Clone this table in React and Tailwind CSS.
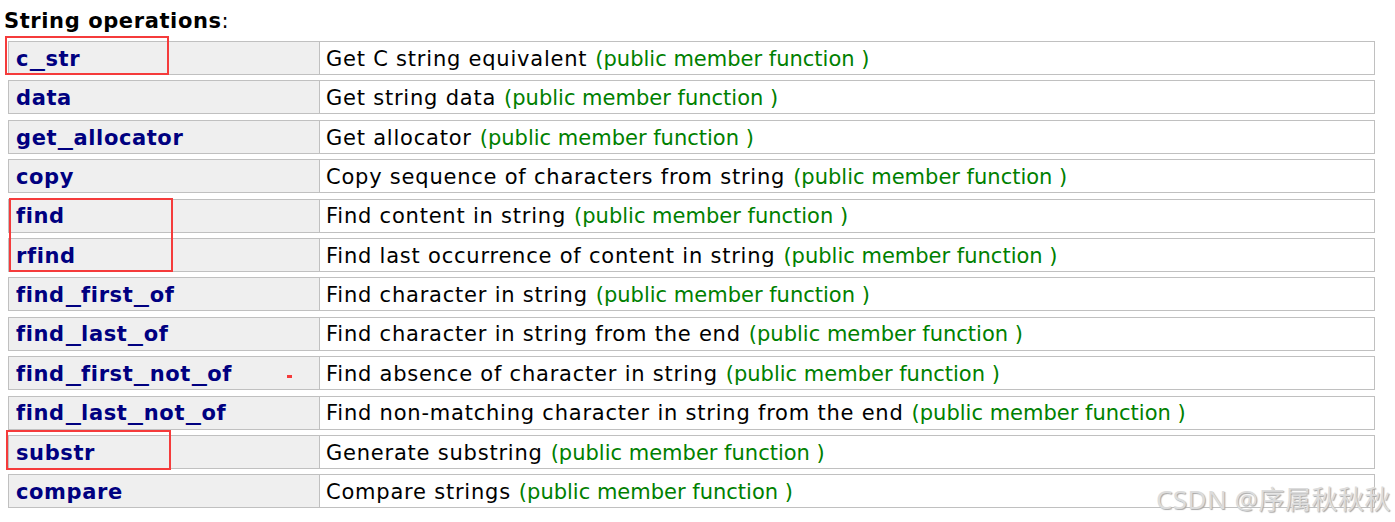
const rows = [
  ['c_str', 'Get C string equivalent'],
  ['data', 'Get string data'],
  ['get_allocator', 'Get allocator'],
  ['copy', 'Copy sequence of characters from string'],
  ['find', 'Find content in string'],
  ['rfind', 'Find last occurrence of content in string'],
  ['find_first_of', 'Find character in string'],
  ['find_last_of', 'Find character in string from the end'],
  ['find_first_not_of', 'Find absence of character in string'],
  ['find_last_not_of', 'Find non-matching character in string from the end'],
  ['substr', 'Generate substring'],
  ['compare', 'Compare strings'],
];

// underscores are wider in the original font, stretch them a bit
const Name = ({ text }) => {
  const parts = text.split('_');
  return (
    <span className="font-bold text-[21px] tracking-[0.6px] text-[#000080] whitespace-nowrap">
      {parts.map((p, i) => (
        <span key={i}>
          {p}
          {i < parts.length - 1 && (
            <span className="inline-block w-[16.4px] text-center tracking-normal">
              <span className="inline-block scale-x-[1.45]">_</span>
            </span>
          )}
        </span>
      ))}
    </span>
  );
};

const App = () => {
  return (
    <div className="relative w-[1395px] h-[522px] bg-white overflow-hidden font-['DejaVu_Sans',Verdana,sans-serif]">
      <div className="pl-[4px] pt-[8px] h-[41px] text-[21px] leading-[26px] tracking-[0.6px] text-black">
        <span className="font-bold">String operations</span>:
      </div>

      <div className="flex flex-col gap-[5.4px] pl-[8px] w-[1375px]">
        {rows.map(([name, desc]) => (
          <div key={name} className="flex h-[34px] border border-[#c0c0c0]">
            <div className="w-[311px] shrink-0 bg-[#efefef] border-r border-[#c0c0c0] pl-[7px] pt-[3px] flex items-center">
              <Name text={name} />
            </div>
            <div className="flex-1 bg-white pl-[6px] pt-[3px] flex items-center text-[21px] tracking-[0.78px] text-black whitespace-nowrap">
              {desc}
              <span className="ml-[8px] tracking-normal text-[#008000]">(public member function )</span>
            </div>
          </div>
        ))}
      </div>

      {/* red highlight boxes */}
      <div className="absolute left-[5px] top-[36px] w-[164px] h-[39px] border-2 border-[#f53b3b]" />
      <div className="absolute left-[9px] top-[198px] w-[164px] h-[74px] border-2 border-[#f53b3b]" />
      <div className="absolute left-[6px] top-[430px] w-[165px] h-[40px] border-2 border-[#f53b3b]" />
      <div className="absolute left-[287px] top-[375px] w-[5px] h-[3px] bg-[#f53b3b]" />

      {/* watermark */}
      <div className="absolute right-[4px] top-[480px] text-[26px] tracking-[0.5px] text-[#dcdcdc] font-['Noto_Sans','Noto_Sans_CJK_SC',sans-serif] [text-shadow:1px_1px_1px_#a8a8a8]">
        CSDN @序属秋秋秋
      </div>
    </div>
  );
};

export default App;
